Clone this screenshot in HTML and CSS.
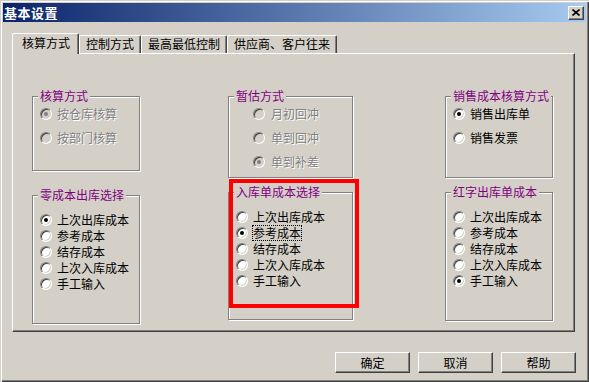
FILE: index.html
```html
<!DOCTYPE html>
<html lang="zh-CN">
<head>
    <meta charset="UTF-8">
    <title>基本设置</title>
    <link rel="stylesheet" href="styles.css">
</head>
<body>

<div class="window">
    <div class="titlebar">
        <span class="title">基本设置</span>
        <span class="close-btn">
            <svg width="8" height="7" viewBox="0 0 8 7"><path d="M0.5 0.5 L7.5 6.5 M7.5 0.5 L0.5 6.5" stroke="#000" stroke-width="1.6" fill="none"/></svg>
        </span>
    </div>

    <div class="dialog-body">
        <div class="tabs">
            <div class="tab active">核算方式</div>
            <div class="tab">控制方式</div>
            <div class="tab">最高最低控制</div>
            <div class="tab">供应商、客户往来</div>
        </div>

        <div class="panel">
            <!-- left column -->
            <div class="col col-left">
                <div class="group g-top disabled">
                    <span class="group-title">核算方式</span>
                    <div class="radio-list loose">
                        <div class="radio-item"><span class="radio on"></span><span class="label">按仓库核算</span></div>
                        <div class="radio-item"><span class="radio"></span><span class="label">按部门核算</span></div>
                    </div>
                </div>
                <div class="group g-bottom">
                    <span class="group-title">零成本出库选择</span>
                    <div class="radio-list tight">
                        <div class="radio-item"><span class="radio on"></span><span class="label">上次出库成本</span></div>
                        <div class="radio-item"><span class="radio"></span><span class="label">参考成本</span></div>
                        <div class="radio-item"><span class="radio"></span><span class="label">结存成本</span></div>
                        <div class="radio-item"><span class="radio"></span><span class="label">上次入库成本</span></div>
                        <div class="radio-item"><span class="radio"></span><span class="label">手工输入</span></div>
                    </div>
                </div>
            </div>

            <!-- middle column -->
            <div class="col col-mid">
                <div class="group g-top disabled">
                    <span class="group-title">暂估方式</span>
                    <div class="radio-list loose indent">
                        <div class="radio-item"><span class="radio"></span><span class="label">月初回冲</span></div>
                        <div class="radio-item"><span class="radio"></span><span class="label">单到回冲</span></div>
                        <div class="radio-item"><span class="radio on"></span><span class="label">单到补差</span></div>
                    </div>
                </div>
                <div class="group g-bottom">
                    <span class="group-title">入库单成本选择</span>
                    <div class="radio-list tight">
                        <div class="radio-item"><span class="radio"></span><span class="label">上次出库成本</span></div>
                        <div class="radio-item"><span class="radio on"></span><span class="label focus">参考成本</span></div>
                        <div class="radio-item"><span class="radio"></span><span class="label">结存成本</span></div>
                        <div class="radio-item"><span class="radio"></span><span class="label">上次入库成本</span></div>
                        <div class="radio-item"><span class="radio"></span><span class="label">手工输入</span></div>
                    </div>
                    <div class="highlight"></div>
                </div>
            </div>

            <!-- right column -->
            <div class="col col-right">
                <div class="group g-top">
                    <span class="group-title">销售成本核算方式</span>
                    <div class="radio-list loose">
                        <div class="radio-item"><span class="radio on"></span><span class="label">销售出库单</span></div>
                        <div class="radio-item"><span class="radio"></span><span class="label">销售发票</span></div>
                    </div>
                </div>
                <div class="group g-bottom">
                    <span class="group-title">红字出库单成本</span>
                    <div class="radio-list tight">
                        <div class="radio-item"><span class="radio"></span><span class="label">上次出库成本</span></div>
                        <div class="radio-item"><span class="radio"></span><span class="label">参考成本</span></div>
                        <div class="radio-item"><span class="radio"></span><span class="label">结存成本</span></div>
                        <div class="radio-item"><span class="radio"></span><span class="label">上次入库成本</span></div>
                        <div class="radio-item"><span class="radio on"></span><span class="label">手工输入</span></div>
                    </div>
                </div>
            </div>
        </div>

        <div class="buttons">
            <button class="btn">确定</button>
            <button class="btn">取消</button>
            <button class="btn">帮助</button>
        </div>
    </div>
</div>

</body>
</html>
```

FILE: styles.css
```css
body, html {
    margin: 0;
    padding: 0;
    width: 589px;
    height: 382px;
    overflow: hidden;
    background-color: #d4d0c8;
    font-family: "Noto Sans CJK SC", "Liberation Sans", sans-serif;
    font-size: 12px;
    color: #000;
}

.window {
    box-sizing: border-box;
    width: 589px;
    height: 382px;
    padding: 3px 3px 0 3px;
    background-color: #d4d0c8;
    box-shadow: inset 1px 1px 0 #d4d0c8, inset 2px 2px 0 #fff,
                inset -1px -1px 0 #404040, inset -2px -2px 0 #808080;
}

/* title bar */
.titlebar {
    height: 19px;
    display: flex;
    align-items: center;
    justify-content: space-between;
    padding: 0 2px 0 1px;
    background: linear-gradient(to right, #0a246a, #a6caf0);
}

.title {
    color: #fff;
    font-weight: bold;
    font-size: 13px;
    line-height: 19px;
    letter-spacing: 0.5px;
}

.close-btn {
    box-sizing: border-box;
    width: 16px;
    height: 14px;
    display: flex;
    align-items: center;
    justify-content: center;
    background-color: #d4d0c8;
    border: 1px solid;
    border-color: #fff #404040 #404040 #fff;
    box-shadow: inset -1px -1px 0 #808080;
}

.dialog-body {
    padding-left: 9px;
}

/* tabs */
.tabs {
    display: flex;
    align-items: flex-end;
    margin-top: 11px;
    height: 20px;
    position: relative;
    z-index: 1;
}

.tab {
    box-sizing: border-box;
    height: 18px;
    line-height: 16px;
    padding: 0 6px;
    background-color: #d4d0c8;
    border-top: 1px solid #fff;
    border-left: 1px solid #fff;
    border-right: 1px solid #404040;
    box-shadow: inset -1px 0 0 #808080;
    border-radius: 2px 2px 0 0;
    white-space: nowrap;
}

.tab.active {
    height: 21px;
    line-height: 18px;
    margin-bottom: -1px;
    padding: 0 8px 0 9px;
}

/* tab panel */
.panel {
    box-sizing: border-box;
    width: 563px;
    height: 279px;
    display: flex;
    align-items: flex-start;
    padding: 42px 0 0 19px;
    border-top: 1px solid #fff;
    border-left: 1px solid #fff;
    border-right: 1px solid #404040;
    border-bottom: 1px solid #404040;
    box-shadow: inset -1px -1px 0 #808080;
}

.col {
    display: flex;
    flex-direction: column;
    width: 108px;
}

.col-mid {
    width: 125px;
    margin-left: 88px;
}

.col-right {
    margin-left: 92px;
}

/* group boxes */
.group {
    box-sizing: border-box;
    position: relative;
    border: 1px solid #808080;
    box-shadow: inset 1px 1px 0 #fff, 1px 1px 0 #fff;
}

.group-title {
    position: absolute;
    top: -8px;
    left: 5px;
    padding: 0 2px;
    line-height: 14px;
    color: #800080;
    background-color: #d4d0c8;
    white-space: nowrap;
}

.col-left .g-top { height: 75px; }
.col-left .g-bottom { height: 129px; margin-top: 24px; }
.col-mid .g-top,
.col-right .g-top { height: 82px; }
.col-mid .g-bottom { height: 128px; margin-top: 14px; }
.col-right .g-bottom { height: 129px; margin-top: 14px; }

.radio-list {
    display: flex;
    flex-direction: column;
    padding-left: 7px;
}

.radio-list.loose { padding-top: 5px; }
.radio-list.loose .radio-item { height: 24px; }
.radio-list.loose.indent { padding-left: 24px; }
.radio-list.loose.indent .radio { margin-right: 6px; }

.radio-list.tight { padding-top: 16px; }
.radio-list.tight .radio-item { height: 16px; }

.radio-item {
    display: flex;
    align-items: center;
    white-space: nowrap;
}

.radio {
    box-sizing: border-box;
    flex: none;
    width: 12px;
    height: 12px;
    margin-right: 5px;
    border-radius: 50%;
    border: 1px solid;
    border-color: #808080 #fff #fff #808080;
    box-shadow: inset 1px 1px 0 #404040, inset -1px -1px 0 #d4d0c8;
    background-color: #fff;
    display: flex;
    align-items: center;
    justify-content: center;
}

.radio.on::after {
    content: '';
    width: 4px;
    height: 4px;
    border-radius: 50%;
    background-color: #000;
}

.label {
    line-height: 14px;
}

.label.focus {
    outline: 1px dotted #000;
}

/* disabled groups */
.disabled .label {
    color: #808080;
    text-shadow: 1px 1px 0 #fff;
}

.disabled .radio {
    background-color: #d4d0c8;
}

.disabled .radio.on::after {
    background-color: #808080;
}

/* red annotation box */
.highlight {
    position: absolute;
    left: 0;
    top: -14px;
    width: 130px;
    height: 129px;
    box-sizing: border-box;
    border: 4px solid #ff0000;
}

/* bottom buttons */
.buttons {
    display: flex;
    justify-content: flex-end;
    gap: 8px;
    margin-top: 20px;
    width: 564px;
}

.btn {
    box-sizing: border-box;
    width: 75px;
    height: 21px;
    padding: 0;
    font-family: "Noto Sans CJK SC", "Liberation Sans", sans-serif;
    font-size: 12px;
    color: #000;
    background-color: #d4d0c8;
    border: 1px solid;
    border-color: #fff #404040 #404040 #fff;
    box-shadow: inset -1px -1px 0 #808080;
}
```
